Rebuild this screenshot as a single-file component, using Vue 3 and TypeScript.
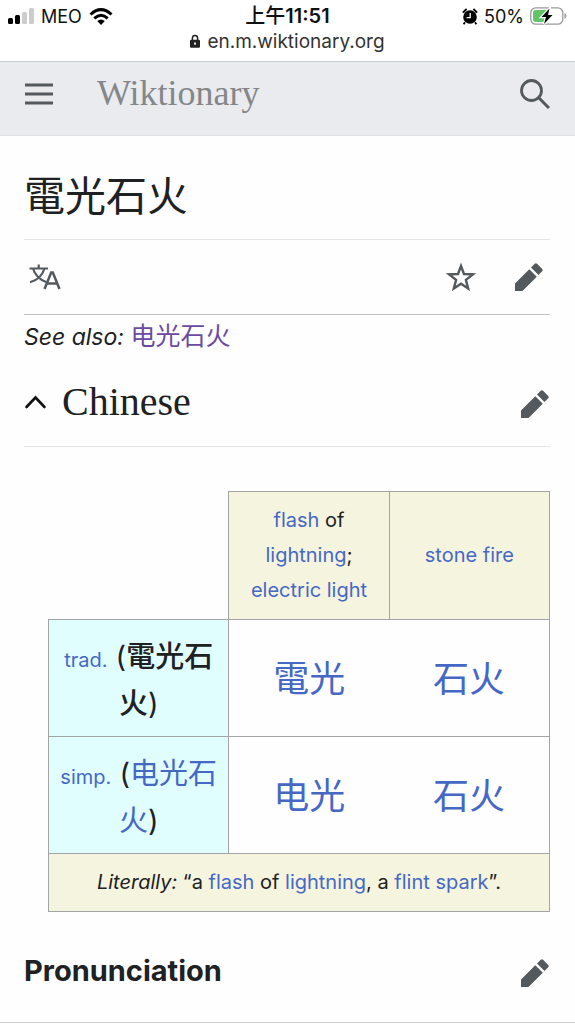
<script setup lang="ts">
interface VariantRow {
  label: string
  word: string
  lang: string
  current: boolean
  parts: string[]
}

const rows: VariantRow[] = [
  { label: 'trad.', word: '電光石火', lang: 'zh-Hant', current: true, parts: ['電光', '石火'] },
  { label: 'simp.', word: '电光石火', lang: 'zh-Hans', current: false, parts: ['电光', '石火'] },
]

const pencil = 'M1 21.5V29h7.500L22.800 14.700 15.300 7.200zM24.500 13 28.200 9.300a1.700 1.700 0 0 0 0-2.400L23.100 1.800a1.700 1.700 0 0 0-2.400 0L17 5.500z'
</script>

<template>
  <div class="page">
    <div class="status">
      <div class="row">
        <div class="side">
          <svg class="signal" viewBox="0 0 26 16" aria-hidden="true">
            <rect x="0" y="10" width="5" height="6" rx="1.500" />
            <rect x="7" y="7" width="5" height="9" rx="1.500" />
            <rect x="14" y="4" width="5" height="12" rx="1.500" fill="#ccc" />
            <rect x="21" y="0" width="5" height="16" rx="1.500" fill="#ccc" />
          </svg>
          <span>MEO</span>
          <svg class="wifi" viewBox="0 0 24 17" aria-hidden="true">
            <g fill="none" stroke="#000" stroke-width="3">
              <path d="M1.500 6.500Q12-3.300 22.500 6.500" />
              <path d="M5.300 10.300Q12 4.200 18.700 10.300" />
            </g>
            <path d="M8.200 13Q12 9.800 15.800 13L12 17z" />
          </svg>
        </div>
        <div class="clock"><span class="cjk">上午</span>11:51</div>
        <div class="side end">
          <svg class="alarm" viewBox="0 0 16 17" aria-hidden="true">
            <circle cx="8" cy="9" r="6.800" />
            <path d="M.8 4.600 4.600 1M15.200 4.600 11.400 1M3 14.300 1.600 16.300M13 14.300l1.400 2" stroke="#000" stroke-width="1.800" />
            <path d="M8.200 5v4.600H4.600" fill="none" stroke="#fff" stroke-width="1.300" />
          </svg>
          <span>50%</span>
          <svg class="battery" viewBox="0 0 37 18" aria-hidden="true">
            <rect x=".8" y=".8" width="32" height="16.400" rx="5" fill="#fff" stroke="#999" stroke-width="1.300" />
            <path d="M6 3h11v12H6a3 3 0 0 1-3-3V6a3 3 0 0 1 3-3z" fill="#62c466" />
            <path d="M34.500 6q2 1 2 3t-2 3z" fill="#999" />
            <path d="M19.500 1.500 11.500 10h4.500l-2 7L22.500 8H18z" stroke="#fff" stroke-width="2.400" paint-order="stroke" />
          </svg>
        </div>
      </div>
      <div class="url">
        <svg class="lock" viewBox="0 0 10 14" aria-hidden="true">
          <path d="M2.400 7V4a2.600 2.600 0 0 1 5.200 0v3" fill="none" stroke="#222" stroke-width="1.500" />
          <rect y="5.800" width="10" height="8" rx="1.200" fill="#222" />
          <rect x="4" y="8.300" width="2" height="2.600" rx="1" fill="#ddd" />
        </svg>
        <span>en.m.wiktionary.org</span>
      </div>
    </div>

    <header class="bar">
      <button type="button" class="icon" aria-label="Menu">
        <svg class="menu" viewBox="0 0 28 24"><path d="M0 3h28M0 12h28M0 21h28" stroke="#54595d" stroke-width="2.800" /></svg>
      </button>
      <a href="#" class="brand">Wiktionary</a>
      <button type="button" class="icon" aria-label="Search">
        <svg class="glyph" viewBox="0 0 30 30">
          <circle cx="11.500" cy="11.500" r="10" fill="none" stroke="#54595d" stroke-width="2.800" />
          <path d="M18.500 18.500 29 29" stroke="#54595d" stroke-width="3" />
        </svg>
      </button>
    </header>

    <main class="content">
      <h1 lang="zh-Hant">電光石火</h1>

      <nav class="tools">
        <button type="button" class="icon language" aria-label="Language">
          <svg class="translate" viewBox="0 0 32 26" fill="none" stroke="#54595d">
            <path d="M.5 4.500H19M9.700.5v4M4 4.500Q6.800 14 17 18M15.500 4.500Q12 15.500 1 18.200" stroke-width="2.200" />
            <path d="m15.500 25 6.700-16.500h1.600L30.500 25M17.500 19.500h11" stroke-width="2.500" />
          </svg>
        </button>
        <button type="button" class="icon" aria-label="Watch">
          <svg class="glyph" viewBox="0 0 30 30">
            <path d="m15 4 3 8 8.800.4-6.900 5.500 2.300 8.600L15 21.700l-7.200 4.800 2.300-8.600L3.200 12.400 12 12z" fill="none" stroke="#54595d" stroke-width="2.400" />
          </svg>
        </button>
        <button type="button" class="icon" aria-label="Edit">
          <svg class="glyph" viewBox="0 0 30 30"><path :d="pencil" fill="#54595d" /></svg>
        </button>
      </nav>

      <p class="see"><i>See also:</i> <a href="#" class="visited" lang="zh-Hans">电光石火</a></p>

      <div class="section">
        <h2>
          <button type="button" class="toggle" aria-expanded="true">
            <svg class="chevron" viewBox="0 0 22 14"><path d="M2 12 11 2.500 20 12" fill="none" stroke="#111" stroke-width="2.600" stroke-linecap="round" /></svg>
            <span>Chinese</span>
          </button>
        </h2>
        <button type="button" class="icon" aria-label="Edit Chinese">
          <svg class="glyph" viewBox="0 0 30 30"><path :d="pencil" fill="#54595d" /></svg>
        </button>
      </div>

      <table>
        <colgroup>
          <col class="first" />
          <col />
          <col />
        </colgroup>
        <tbody>
          <tr>
            <td class="blank"></td>
            <th class="gloss" scope="col"><a href="#">flash</a> of <a href="#">lightning</a>; <a href="#">electric light</a></th>
            <th class="gloss" scope="col"><a href="#">stone fire</a></th>
          </tr>
          <tr v-for="row in rows" :key="row.label">
            <th class="form" scope="row">
              <a href="#" class="label">{{ row.label }}</a>
              (<b v-if="row.current" :lang="row.lang">{{ row.word }}</b><a v-else href="#" :lang="row.lang">{{ row.word }}</a>)
            </th>
            <td v-for="part in row.parts" :key="part" class="part"><a href="#" :lang="row.lang">{{ part }}</a></td>
          </tr>
          <tr>
            <td class="gloss" colspan="3">
              <i>Literally:</i> “a <a href="#">flash</a> of <a href="#">lightning</a>, a <a href="#">flint spark</a>”.
            </td>
          </tr>
        </tbody>
      </table>

      <div class="subsection">
        <h3>Pronunciation</h3>
        <button type="button" class="icon" aria-label="Edit Pronunciation">
          <svg class="glyph" viewBox="0 0 30 30"><path :d="pencil" fill="#54595d" /></svg>
        </button>
      </div>
    </main>
    <div class="edge"></div>
  </div>
</template>

<style>
body {
  margin: 0;
  background: #fefefe;
}
</style>

<style scoped>
* {
  box-sizing: border-box;
}
.page {
  font-family: Inter, "Noto Sans CJK SC", sans-serif;
  color: #202122;
  font-size: 20px;
}
[lang="zh-Hant"] {
  font-family: "Noto Sans CJK TC", sans-serif;
}
[lang="zh-Hans"] {
  font-family: "Noto Sans CJK SC", sans-serif;
}
svg {
  display: block;
  flex: none;
}
a {
  color: #4668c5;
  text-decoration: none;
}
button {
  padding: 0;
  border: 0;
  background: none;
  color: inherit;
  font: inherit;
}
.icon {
  display: flex;
  align-items: center;
  justify-content: center;
  flex: none;
}
.glyph {
  width: 30px;
  height: 30px;
}
.status {
  height: 61px;
  padding: 4px 8px 0;
  background: #fff;
  color: #111;
}
.row {
  display: grid;
  grid-template-columns: 1fr auto 1fr;
  align-items: center;
  height: 24px;
  font-size: 18px;
}
.side {
  display: flex;
  align-items: center;
  gap: 7px;
}
.end {
  justify-content: flex-end;
  gap: 6px;
}
.signal {
  width: 26px;
  height: 16px;
}
.wifi {
  width: 24px;
  height: 17px;
}
.alarm {
  width: 16px;
  height: 17px;
}
.battery {
  width: 37px;
  height: 18px;
}
.clock {
  font-size: 20px;
  font-weight: 600;
  line-height: 24px;
}
.cjk {
  font-weight: 500;
}
.url {
  display: flex;
  align-items: center;
  justify-content: center;
  gap: 7px;
  height: 26px;
  font-size: 19px;
  color: #333;
}
.lock {
  width: 10px;
  height: 14px;
}
.bar {
  display: flex;
  align-items: center;
  height: 75px;
  padding: 0 25px 9px 24px;
  background: #e9ebef;
  border-top: 1px solid #c9cacd;
  border-bottom: 1px solid #dfe1e4;
}
.menu {
  width: 30px;
  height: 24px;
}
.brand {
  flex: 1;
  margin-left: 43px;
  font-family: "Liberation Serif", serif;
  font-size: 36px;
  line-height: 40px;
  padding-bottom: 3px;
  color: #84878a;
}
.content {
  padding: 0 25px 0 24px;
}
h1 {
  margin: 0;
  padding: 28px 0 16px;
  border-bottom: 1px solid #e2e4e7;
  font-size: 41px;
  line-height: 59px;
  font-weight: 400;
}
.tools {
  display: flex;
  align-items: center;
  gap: 38px;
  height: 75px;
  padding-right: 6px;
  border-bottom: 1px solid #c0c2c5;
}
.language {
  margin-right: auto;
  padding-left: 5px;
}
.translate {
  width: 32px;
  height: 26px;
}
.see {
  margin: 0;
  padding-top: 4px;
  font-size: 23px;
  line-height: 36px;
}
.visited {
  font-size: 25px;
  line-height: 24px;
  color: #6b4ba1;
}
.section {
  display: flex;
  align-items: center;
  justify-content: space-between;
  height: 92px;
  padding-top: 6px;
  border-bottom: 1px solid #e2e4e7;
}
h2 {
  margin: 0;
  padding-bottom: 4px;
  font: 400 40px/46px "Liberation Serif", serif;
}
.toggle {
  display: flex;
  align-items: center;
  gap: 15px;
}
.chevron {
  width: 23px;
  height: 14px;
}
table {
  width: calc(100% - 24px);
  margin: 44px 0 0 24px;
  border-collapse: collapse;
  table-layout: fixed;
  text-align: center;
  line-height: 35px;
}
.first {
  width: 36%;
}
td,
th {
  padding: 11px 10px;
  border: 1px solid #a2a4a6;
  font-weight: 400;
}
.blank {
  border: 0;
}
.gloss {
  background: #f5f4df;
}
.form {
  padding: 13px 8px 9px;
  background: #e1feff;
  font-size: 29px;
  line-height: 47px;
}
.form a,
.form b {
  line-height: 28px;
}
.form .label {
  font-size: 20px;
}
.form b {
  font-weight: 500;
}
.part {
  border-left: 0;
  border-right: 0;
  font-size: 36px;
}
.part:last-child {
  border-right: 1px solid #a2a4a6;
}
.subsection {
  display: flex;
  align-items: center;
  justify-content: space-between;
  height: 60px;
  margin-top: 31px;
}
h3 {
  margin: 0;
  padding-bottom: 4px;
  font-size: 29px;
  line-height: 36px;
  font-weight: 700;
}
.edge {
  margin-top: 19px;
  border-top: 1px solid #cfd0d2;
}
</style>
